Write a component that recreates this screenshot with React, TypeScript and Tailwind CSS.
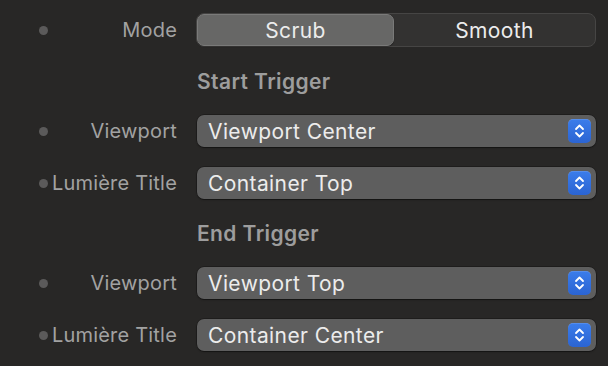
import React from "react";

function Stepper() {
  return (
    <div className="flex h-[24px] w-[23px] items-center justify-center rounded-[5px] bg-gradient-to-b from-[#3b7deb] to-[#2b64d2] shadow-[inset_0_0.5px_0_rgba(255,255,255,0.25)]">
      <svg width="11" height="16" viewBox="0 0 11 16" fill="none">
        <path d="M2 6 L5.5 2.5 L9 6" stroke="white" strokeWidth="1.8" strokeLinecap="round" strokeLinejoin="round" />
        <path d="M2 10 L5.5 13.5 L9 10" stroke="white" strokeWidth="1.8" strokeLinecap="round" strokeLinejoin="round" />
      </svg>
    </div>
  );
}

function Label({ text }: { text: string }) {
  return (
    <div className="flex w-[177px] shrink-0 items-center pl-[39px]">
      <div className="h-[9px] w-[9px] shrink-0 rounded-full bg-[#5b5a5a]" />
      <div className="flex-1 whitespace-nowrap text-right text-[20px] tracking-[0.2px] text-[#a2a2a2]">{text}</div>
    </div>
  );
}

function Dropdown({ label, value }: { label: string; value: string }) {
  return (
    <div className="flex h-[32px] items-center">
      <Label text={label} />
      <div className="ml-[20px] mr-[12px] flex h-[32px] flex-1 items-center justify-between rounded-[7px] bg-[#5e5e5e] pl-[11px] pr-[5px] text-[21px] tracking-[0.4px] text-[#ececec] shadow-[0_0_0_0.5px_rgba(0,0,0,0.45),0_1px_1.5px_rgba(0,0,0,0.35)]">
        <span>{value}</span>
        <Stepper />
      </div>
    </div>
  );
}

function Heading({ text }: { text: string }) {
  return (
    <div className="flex h-[68px] items-center pl-[197px] text-[21px] font-semibold tracking-[0.4px] text-[#9d9d9d]">
      {text}
    </div>
  );
}

export default function App() {
  return (
    <div
      className="h-[366px] w-[608px] overflow-hidden bg-[#282726] pt-[13px] leading-none"
      style={{ fontFamily: "Inter, 'Noto Sans', sans-serif" }}
    >
      <div className="flex h-[34px] items-center">
        <Label text="Mode" />
        <div className="ml-[19px] mr-[12px] flex h-[34px] flex-1 rounded-[8px] border border-[#464544] bg-[#333231] text-[21px] tracking-[0.4px]">
          <div className="flex w-[197px] items-center justify-center rounded-[7px] border border-[#7a7a79] bg-[#676766] text-[#ececec] shadow-[0_0.5px_1px_rgba(0,0,0,0.3)]">
            Scrub
          </div>
          <div className="flex flex-1 items-center justify-center text-[#ececec]">Smooth</div>
        </div>
      </div>
      <Heading text="Start Trigger" />
      <div className="flex flex-col gap-[20px]">
        <Dropdown label="Viewport" value="Viewport Center" />
        <Dropdown label="Lumière Title" value="Container Top" />
      </div>
      <Heading text="End Trigger" />
      <div className="flex flex-col gap-[20px]">
        <Dropdown label="Viewport" value="Viewport Top" />
        <Dropdown label="Lumière Title" value="Container Center" />
      </div>
    </div>
  );
}
